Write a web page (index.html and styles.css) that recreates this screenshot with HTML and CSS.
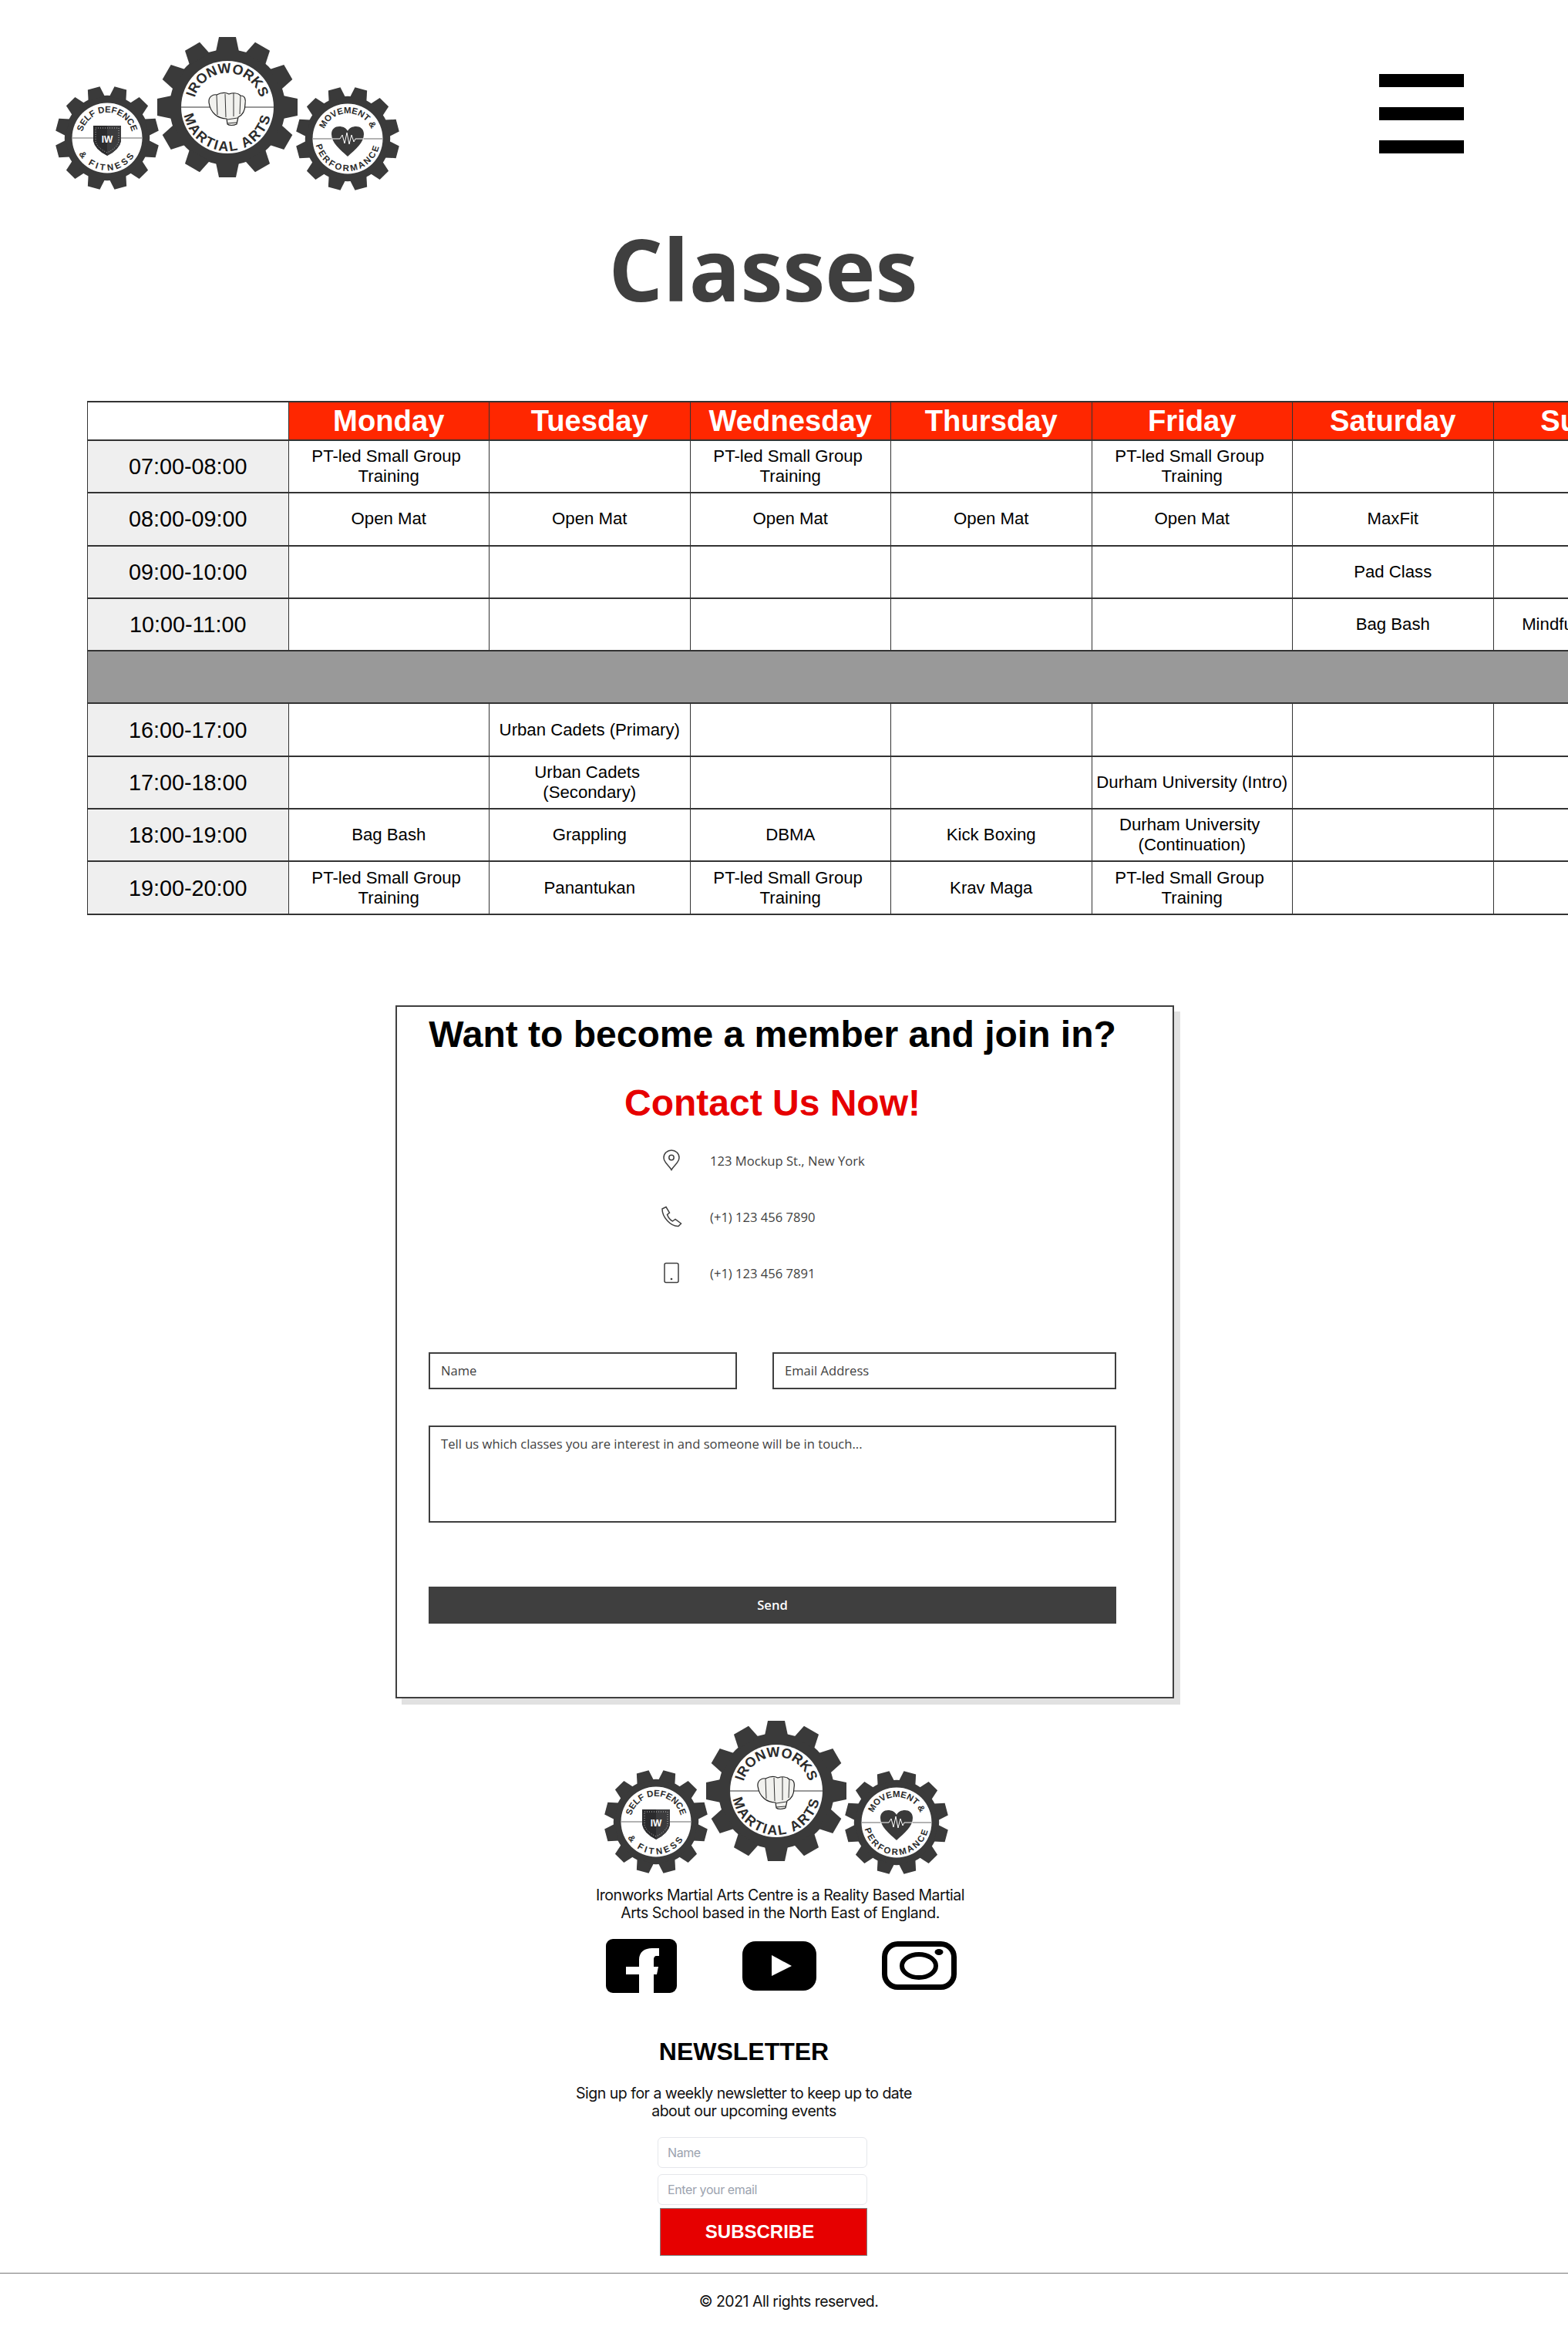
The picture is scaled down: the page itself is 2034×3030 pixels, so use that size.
FILE: index.html
```html
<!DOCTYPE html>
<html lang="en">
<head>
  <meta charset="UTF-8">
  <title>Classes - Ironworks Martial Arts</title>
  <link rel="stylesheet" href="styles.css">
</head>

<body>
  <svg class="defs" width="0" height="0" aria-hidden="true">
    <defs>
      <path id="tooth" d="M-15,-72 L-11,-91 L11,-91 L15,-72 Z"/>
      <g id="cog">
        <circle r="75"/>
        <use href="#tooth"/>
        <use href="#tooth" transform="rotate(30)"/>
        <use href="#tooth" transform="rotate(60)"/>
        <use href="#tooth" transform="rotate(90)"/>
        <use href="#tooth" transform="rotate(120)"/>
        <use href="#tooth" transform="rotate(150)"/>
        <use href="#tooth" transform="rotate(180)"/>
        <use href="#tooth" transform="rotate(210)"/>
        <use href="#tooth" transform="rotate(240)"/>
        <use href="#tooth" transform="rotate(270)"/>
        <use href="#tooth" transform="rotate(300)"/>
        <use href="#tooth" transform="rotate(330)"/>
      </g>
      <!-- long arcs so the curved text never runs off the path -->
      <path id="bigTop" d="M-31,31 A44,44 0 1 1 31,31"/>
      <path id="bigBottom" d="M-40.3,-40.3 A57,57 0 1 0 40.3,-40.3"/>
      <path id="smallTop" d="M-23.3,23.3 A33,33 0 1 1 23.3,23.3"/>
      <path id="smallBottom" d="M-29.7,-29.7 A42,42 0 1 0 29.7,-29.7"/>

      <symbol id="logo" viewBox="0 0 447 199">
        <!-- left cog -->
        <g transform="translate(67,131)">
          <use href="#cog" class="cog" transform="rotate(15) scale(.736)"/>
          <circle r="45.5" class="cog-face"/>
          <line x1="-45" x2="45" class="cog-line"/>
          <text class="cog-small-text"><textPath href="#smallTop" startOffset="50%">SELF DEFENCE</textPath></text>
          <text class="cog-small-text wide"><textPath href="#smallBottom" startOffset="50%">&amp; FITNESS</textPath></text>
          <path d="M-18,-16 L18,-16 L18,4 Q16,15 0,23 Q-16,15 -18,4 Z" fill="#2b2b2d"/>
          <path d="M0,-16 L18,-16 L18,4 Q16,15 0,23 Z" fill="#3c3c3e"/>
          <path d="M-15,-13 L15,-13 L15,4 Q13,13 0,19 Q-13,13 -15,4 Z" class="shield-dots"/>
          <text class="shield-text" y="6">IW</text>
        </g>
        <!-- right cog -->
        <g transform="translate(379,132)">
          <use href="#cog" class="cog" transform="rotate(15) scale(.736)"/>
          <circle r="45.5" class="cog-face"/>
          <line x1="-45" x2="45" class="cog-line"/>
          <text class="cog-small-text"><textPath href="#smallTop" startOffset="50%">MOVEMENT &amp;</textPath></text>
          <text class="cog-small-text spaced"><textPath href="#smallBottom" startOffset="50%">PERFORMANCE</textPath></text>
          <path d="M0,23 C-10,14 -21,5 -21,-6 C-21,-13 -16,-16 -11,-16 C-6,-16 -2,-14 0,-10 C2,-14 6,-16 11,-16 C16,-16 21,-13 21,-6 C21,5 10,14 0,23 Z" fill="#3a3a3a"/>
          <polyline points="-21,0 -10,0 -7,-5 -4,6 -1,-8 2,7 5,-5 8,4 10,0 21,0" class="pulse"/>
        </g>
        <!-- main cog -->
        <g transform="translate(223,91)">
          <use href="#cog" class="cog"/>
          <circle r="60" class="cog-face"/>
          <line x1="-60" x2="60" class="cog-line-dark"/>
          <text class="cog-big-text"><textPath href="#bigTop" startOffset="50%">IRONWORKS</textPath></text>
          <text class="cog-big-text spaced"><textPath href="#bigBottom" startOffset="50%">MARTIAL ARTS</textPath></text>
          <path d="M-24,-6 C-25,-14 -18,-17 -14,-16 C-8,-19 -2,-19 2,-17 C8,-19 14,-18 17,-15 C23,-15 24,-10 23,-4 C23,4 20,10 14,13 L12,22 C8,24 2,24 0,22 L-1,15 C-12,15 -22,8 -24,-6 Z" class="fist"/>
          <path d="M-14,-16 L-13,10 M-3,-17 L-2,13 M8,-18 L8,12 M17,-15 L16,9 M0,16 L13,14 M0,21 L12,20" class="fist-lines"/>
        </g>
      </symbol>
    </defs>
  </svg>

  <div class="page">
    <header class="topbar">
      <svg class="logo"><use href="#logo"/></svg>
      <div class="burger"><span></span><span></span><span></span></div>
    </header>

    <h1 class="title">Classes</h1>

    <table class="timetable">
      <thead>
        <tr>
          <th class="corner"></th>
          <th>Monday</th>
          <th>Tuesday</th>
          <th>Wednesday</th>
          <th>Thursday</th>
          <th>Friday</th>
          <th>Saturday</th>
          <th>Sunday</th>
        </tr>
      </thead>
      <tbody>
        <tr>
          <td class="time">07:00-08:00</td>
          <td>PT-led Small Group&nbsp; Training</td>
          <td></td>
          <td>PT-led Small Group&nbsp; Training</td>
          <td></td>
          <td>PT-led Small Group&nbsp; Training</td>
          <td></td>
          <td></td>
        </tr>
        <tr>
          <td class="time">08:00-09:00</td>
          <td>Open Mat</td>
          <td>Open Mat</td>
          <td>Open Mat</td>
          <td>Open Mat</td>
          <td>Open Mat</td>
          <td>MaxFit</td>
          <td></td>
        </tr>
        <tr>
          <td class="time">09:00-10:00</td>
          <td></td>
          <td></td>
          <td></td>
          <td></td>
          <td></td>
          <td>Pad Class</td>
          <td></td>
        </tr>
        <tr>
          <td class="time">10:00-11:00</td>
          <td></td>
          <td></td>
          <td></td>
          <td></td>
          <td></td>
          <td>Bag Bash</td>
          <td>Mindfulness Class&nbsp;</td>
        </tr>
        <tr>
          <td class="gap" colspan="8"></td>
        </tr>
        <tr>
          <td class="time">16:00-17:00</td>
          <td></td>
          <td>Urban Cadets (Primary)</td>
          <td></td>
          <td></td>
          <td></td>
          <td></td>
          <td></td>
        </tr>
        <tr>
          <td class="time">17:00-18:00</td>
          <td></td>
          <td>Urban Cadets&nbsp; (Secondary)</td>
          <td></td>
          <td></td>
          <td>Durham University (Intro)</td>
          <td></td>
          <td></td>
        </tr>
        <tr>
          <td class="time">18:00-19:00</td>
          <td>Bag Bash</td>
          <td>Grappling</td>
          <td>DBMA</td>
          <td>Kick Boxing</td>
          <td>Durham University&nbsp; (Continuation)</td>
          <td></td>
          <td></td>
        </tr>
        <tr>
          <td class="time">19:00-20:00</td>
          <td>PT-led Small Group&nbsp; Training</td>
          <td>Panantukan</td>
          <td>PT-led Small Group&nbsp; Training</td>
          <td>Krav Maga</td>
          <td>PT-led Small Group&nbsp; Training</td>
          <td></td>
          <td></td>
        </tr>
      </tbody>
    </table>

    <section class="contact">
      <h2 class="contact-title">Want to become a member and join in?</h2>
      <h2 class="contact-title red">Contact Us Now!</h2>

      <ul class="info">
        <li>
          <svg class="info-icon" viewBox="0 0 28 28">
            <path d="M14 26.5 C11 21 4 17 4 10.5 A10 9.5 0 0 1 24 10.5 C24 17 17 21 14 26.5 Z"/>
            <circle cx="14" cy="10.5" r="3.2"/>
          </svg>
          <span>123 Mockup St., New York</span>
        </li>
        <li>
          <svg class="info-icon" viewBox="0 0 28 28">
            <path d="M2 4 L7 1.5 L11.5 9 L8.5 11.5 C10 15.5 12.5 18.5 15.5 20 L19 17.5 L26.5 23 L23 26.5 C13 27 2 15 2 4 Z"/>
          </svg>
          <span>(+1) 123 456 7890</span>
        </li>
        <li>
          <svg class="info-icon" viewBox="0 0 28 28">
            <rect x="5" y="1.5" width="18" height="25" rx="2"/>
            <circle cx="14" cy="22" r=".6"/>
          </svg>
          <span>(+1) 123 456 7891</span>
        </li>
      </ul>

      <form class="contact-form">
        <div class="contact-row">
          <input type="text" placeholder="Name">
          <input type="text" placeholder="Email Address">
        </div>
        <textarea placeholder="Tell us which classes you are interest in and someone will be in touch..."></textarea>
        <button type="button" class="send">Send</button>
      </form>
    </section>

    <footer class="footer">
      <svg class="logo footer-logo"><use href="#logo"/></svg>
      <p class="about">Ironworks Martial Arts Centre is a Reality Based Martial Arts School based in the North East of England.</p>

      <div class="social">
        <svg width="92" height="70" viewBox="0 0 92 70">
          <rect width="92" height="70" rx="9"/>
          <path fill="#fff" d="M43 70 V46 H26 V36 H43 V27 C43 17 50 12 60 12 H69 V22 H66 C63 22 62 24 62 27 V36 H68 L66 46 H62 V70 Z"/>
        </svg>
        <svg width="96" height="64" viewBox="0 0 96 64">
          <rect width="96" height="64" rx="17"/>
          <path fill="#fff" d="M38 18 L64 32 L38 45 Z"/>
        </svg>
        <svg width="97" height="63" viewBox="0 0 97 63">
          <rect x="3.5" y="3.5" width="90" height="56" rx="17" fill="none" stroke="#000" stroke-width="7"/>
          <ellipse cx="48" cy="32" rx="22" ry="15" fill="none" stroke="#000" stroke-width="6"/>
          <ellipse cx="74" cy="14" rx="5.5" ry="4"/>
        </svg>
      </div>

      <div class="newsletter">
        <h3>NEWSLETTER</h3>
        <p>Sign up for a weekly newsletter to keep up to date about our upcoming events</p>
        <form class="newsletter-form">
          <input type="text" placeholder="Name">
          <input type="email" placeholder="Enter your email">
          <button type="button">SUBSCRIBE</button>
        </form>
      </div>

      <div class="copyright">© 2021 All rights reserved.</div>
    </footer>
  </div>
</body>
</html>
```

FILE: styles.css
```css
html, body {
  margin: 0;
  background-color: white;
}

body {
  font-family: "Liberation Sans", Arial, sans-serif;
  overflow-x: hidden;
}

.defs {
  position: absolute;
}

.page {
  width: 2034px;
  overflow: hidden;
}

/* top bar */
.topbar {
  display: flex;
  justify-content: space-between;
  padding: 48px 135px 0 72px;
}

.logo {
  display: block;
  width: 447px;
  height: 199px;
}

.burger {
  margin-top: 48px;
  width: 110px;
  display: flex;
  flex-direction: column;
  gap: 26px;
}

.burger span {
  display: block;
  height: 17px;
  background-color: black;
}

.title {
  margin: 35px 54px 106px 0;
  font-family: "Open Sans", sans-serif;
  font-size: 110.5px;
  font-weight: 700;
  line-height: 132px;
  text-align: center;
  color: #3f3f3f;
}

/* logo drawing */
.cog {
  fill: #3a3a3a;
}

.cog-face {
  fill: white;
}

.cog-line {
  stroke: #9a9a9a;
  stroke-width: 1.5;
}

.cog-line-dark {
  stroke: #333;
  stroke-width: 1;
}

.cog-big-text,
.cog-small-text {
  font-family: "Liberation Sans", sans-serif;
  font-weight: 700;
  fill: #2b2b2b;
  text-anchor: middle;
}

.cog-big-text {
  font-size: 18px;
}

.cog-big-text.spaced {
  letter-spacing: 2px;
}

.cog-small-text {
  font-size: 11.5px;
}

.cog-small-text.spaced {
  letter-spacing: 2.3px;
}

.cog-small-text.wide {
  letter-spacing: 3.2px;
}

.shield-dots {
  fill: none;
  stroke: #ddd;
  stroke-width: .8;
  stroke-dasharray: 1 2;
}

.shield-text {
  font-family: "Liberation Sans", sans-serif;
  font-size: 12px;
  font-weight: 700;
  fill: white;
  text-anchor: middle;
}

.pulse {
  fill: none;
  stroke: white;
  stroke-width: 1;
}

.fist {
  fill: #f1f1ee;
  stroke: #222;
  stroke-width: 1.2;
}

.fist-lines {
  fill: none;
  stroke: #333;
  stroke-width: 1;
}

/* timetable */
.timetable {
  margin-left: 113px;
  width: 2085px;
  table-layout: fixed;
  border-collapse: collapse;
  font-size: 22.2px;
  line-height: 26px;
  color: #000;
}

.timetable th,
.timetable td {
  border: 1px solid #333;
  border-width: 2px 1px;
  padding: 0 4px;
  text-align: center;
  vertical-align: middle;
}

.timetable td {
  height: 66.3px;
}

.timetable th {
  height: 48px;
  padding: 0;
  background-color: #ff2700;
  color: white;
  font-size: 38.2px;
  line-height: 40px;
}

.timetable .corner {
  background-color: white;
}

.timetable .time {
  background-color: #efefef;
  font-size: 28.8px;
}

.timetable .gap {
  background-color: #999;
}

/* contact card */
.contact {
  box-sizing: border-box;
  margin: 117px 0 29px 513px;
  width: 1010px;
  height: 899px;
  padding: 8px 73px 0 41px;
  border: 2px solid #3f3f3f;
  box-shadow: 8px 8px 0 #e1e1e1;
}

.contact-title {
  margin: 0 0 34px;
  font-size: 48px;
  line-height: 55px;
  font-weight: 700;
  text-align: center;
  color: black;
}

.contact-title.red {
  margin-bottom: 11px;
  color: #e60000;
}

.info {
  list-style: none;
  margin: 0 0 0 301px;
  padding: 0;
}

.info li {
  display: flex;
  align-items: center;
  gap: 36px;
  height: 73px;
  font-family: "Open Sans", sans-serif;
  font-size: 16.6px;
  color: #3f3f3f;
}

.info-icon {
  width: 28px;
  height: 28px;
  fill: none;
  stroke: #3f3f3f;
  stroke-width: 1.5;
}

.contact-form {
  margin-top: 66px;
}

.contact-row {
  display: grid;
  grid-template-columns: 400px 446px;
  gap: 46px;
}

.contact-form input,
.contact-form textarea {
  box-sizing: border-box;
  display: block;
  margin: 0;
  padding: 0 14px;
  border: 2px solid #3f3f3f;
  border-radius: 0;
  outline: none;
  font-family: "Open Sans", sans-serif;
  font-size: 16.6px;
  color: #3f3f3f;
}

.contact-form input {
  width: 100%;
  height: 48px;
}

.contact-form textarea {
  width: 892px;
  height: 126px;
  margin-top: 47px;
  padding-top: 10px;
  resize: none;
}

.contact-form ::placeholder {
  color: #3f3f3f;
  opacity: 1;
}

.send {
  display: block;
  width: 892px;
  height: 48px;
  margin-top: 83px;
  border: none;
  background-color: #3f3f3f;
  color: white;
  font-family: "Open Sans", sans-serif;
  font-size: 16.6px;
  font-weight: 600;
}

/* footer */
.footer-logo {
  margin-left: 784px;
}

.about {
  margin: 16px 0 0 762px;
  width: 500px;
  font-family: Inter, sans-serif;
  font-size: 19.5px;
  letter-spacing: -.5px;
  line-height: 23px;
  text-align: center;
  color: #111;
}

.social {
  display: flex;
  align-items: center;
  gap: 85px;
  margin: 22px 0 0 786px;
}

.newsletter {
  margin: 58px 0 0 745px;
  width: 440px;
}

.newsletter h3 {
  margin: 0 0 24px;
  font-size: 32px;
  line-height: 37px;
  text-align: center;
  color: black;
}

.newsletter p {
  margin: 0 0 22px;
  font-family: Inter, sans-serif;
  font-size: 19.5px;
  letter-spacing: -.5px;
  line-height: 23px;
  text-align: center;
  color: #111;
}

.newsletter-form {
  display: flex;
  flex-direction: column;
  margin-left: 108px;
  width: 272px;
}

.newsletter-form input {
  box-sizing: border-box;
  height: 40px;
  margin-bottom: 8px;
  padding: 0 12px;
  border: 1px solid #e5e7eb;
  border-radius: 6px;
  outline: none;
  font-family: Inter, sans-serif;
  font-size: 16px;
  letter-spacing: -.4px;
}

.newsletter-form input::placeholder {
  color: #9ca3af;
  opacity: 1;
}

.newsletter-form button {
  box-sizing: border-box;
  height: 62px;
  margin: -4px 0 0 3px;
  padding: 0 10px 0 0;
  border: 1px solid #808080;
  background-color: #e60000;
  color: white;
  font-family: "Liberation Sans", Arial, sans-serif;
  font-size: 24px;
  font-weight: 700;
}

.copyright {
  margin-top: 22px;
  padding: 25px 0 0 12px;
  border-top: 1px solid #777;
  font-family: Inter, sans-serif;
  font-size: 19.5px;
  letter-spacing: -.5px;
  line-height: 23px;
  text-align: center;
  color: #111;
}
```
